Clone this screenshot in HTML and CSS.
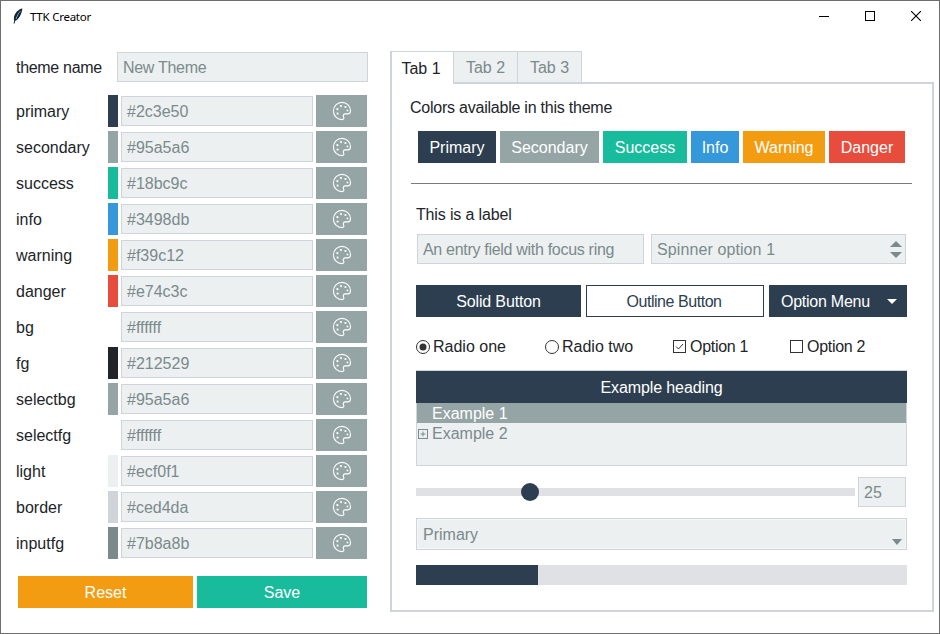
FILE: index.html
```html
<!DOCTYPE html>
<html lang="en">
<head>
    <meta charset="UTF-8">
    <title>TTK Creator</title>
    <link rel="stylesheet" href="styles.css">
</head>
<body>
<svg class="defs" width="0" height="0">
    <symbol id="palette" viewBox="0 0 20 20">
        <path d="M10 1.4C5.2 1.4 1.4 5.2 1.4 10c0 4.8 3.9 8.6 8.6 8.6 1.7 0 2.3-1.2 1.6-2.5-.9-1.6-.1-3.2 1.7-3.2h2.5c1.7 0 2.7-1.2 2.7-3.1 0-4.7-3.7-8.4-8.5-8.4z" fill="none" stroke="#fff" stroke-width="1.1"/>
        <circle cx="5.4" cy="8.2" r="1.1" fill="#fff"/>
        <circle cx="9" cy="5" r="1.1" fill="#fff"/>
        <circle cx="13.4" cy="6" r="1.1" fill="#fff"/>
        <circle cx="15.4" cy="9.4" r=".9" fill="#fff"/>
        <circle cx="5.6" cy="12.6" r="1.1" fill="#fff"/>
    </symbol>
</svg>
<div class="window">
    <!-- Title bar -->
    <div class="titlebar">
        <svg class="app-icon" width="10" height="16" viewBox="0 0 10 16">
            <path d="M9.4 .5C5.5 1 1.5 5 .9 9.8c-.2 1.4.2 2.6.9 3.2C5.4 12 8.6 7 9.4 .5z" fill="#16222e"/>
            <path d="M7.5 3C5.5 5 4 8 3 11" stroke="#6fa8dc" stroke-width="1" fill="none"/>
            <path d="M1.8 12.5L1 15.5" stroke="#16222e" stroke-width="1"/>
        </svg>
        <span class="app-title">TTK Creator</span>
        <div class="win-controls">
            <div class="win-btn"><svg width="10" height="10" viewBox="0 0 10 10"><path d="M0 5.5h10" stroke="#000"/></svg></div>
            <div class="win-btn"><svg width="10" height="10" viewBox="0 0 10 10"><rect x=".5" y=".5" width="9" height="9" fill="none" stroke="#000"/></svg></div>
            <div class="win-btn"><svg width="10" height="10" viewBox="0 0 10 10"><path d="M0 0l10 10M10 0L0 10" stroke="#000" stroke-width="1.1"/></svg></div>
        </div>
    </div>

    <div class="main">
        <!-- Left side: color settings -->
        <div class="settings">
            <div class="name-row">
                <span class="name-label">theme name</span>
                <div class="field name-field">New Theme</div>
            </div>
            <div class="color-rows">
                <div class="color-row"><span>primary</span><i class="swatch c-primary"></i><div class="field">#2c3e50</div><div class="pick"><svg width="20" height="20"><use href="#palette"/></svg></div></div>
                <div class="color-row"><span>secondary</span><i class="swatch c-secondary"></i><div class="field">#95a5a6</div><div class="pick"><svg width="20" height="20"><use href="#palette"/></svg></div></div>
                <div class="color-row"><span>success</span><i class="swatch c-success"></i><div class="field">#18bc9c</div><div class="pick"><svg width="20" height="20"><use href="#palette"/></svg></div></div>
                <div class="color-row"><span>info</span><i class="swatch c-info"></i><div class="field">#3498db</div><div class="pick"><svg width="20" height="20"><use href="#palette"/></svg></div></div>
                <div class="color-row"><span>warning</span><i class="swatch c-warning"></i><div class="field">#f39c12</div><div class="pick"><svg width="20" height="20"><use href="#palette"/></svg></div></div>
                <div class="color-row"><span>danger</span><i class="swatch c-danger"></i><div class="field">#e74c3c</div><div class="pick"><svg width="20" height="20"><use href="#palette"/></svg></div></div>
                <div class="color-row"><span>bg</span><i class="swatch c-bg"></i><div class="field">#ffffff</div><div class="pick"><svg width="20" height="20"><use href="#palette"/></svg></div></div>
                <div class="color-row"><span>fg</span><i class="swatch c-fg"></i><div class="field">#212529</div><div class="pick"><svg width="20" height="20"><use href="#palette"/></svg></div></div>
                <div class="color-row"><span>selectbg</span><i class="swatch c-secondary"></i><div class="field">#95a5a6</div><div class="pick"><svg width="20" height="20"><use href="#palette"/></svg></div></div>
                <div class="color-row"><span>selectfg</span><i class="swatch c-bg"></i><div class="field">#ffffff</div><div class="pick"><svg width="20" height="20"><use href="#palette"/></svg></div></div>
                <div class="color-row"><span>light</span><i class="swatch c-light"></i><div class="field">#ecf0f1</div><div class="pick"><svg width="20" height="20"><use href="#palette"/></svg></div></div>
                <div class="color-row"><span>border</span><i class="swatch c-border"></i><div class="field">#ced4da</div><div class="pick"><svg width="20" height="20"><use href="#palette"/></svg></div></div>
                <div class="color-row"><span>inputfg</span><i class="swatch c-inputfg"></i><div class="field">#7b8a8b</div><div class="pick"><svg width="20" height="20"><use href="#palette"/></svg></div></div>
            </div>
            <div class="actions">
                <div class="btn c-warning reset-btn">Reset</div>
                <div class="btn c-success save-btn">Save</div>
            </div>
        </div>

        <!-- Right side: preview -->
        <div class="preview">
            <div class="tabs">
                <div class="tab tab-active">Tab 1</div>
                <div class="tab">Tab 2</div>
                <div class="tab">Tab 3</div>
            </div>
            <div class="panel">
                <div class="panel-title">Colors available in this theme</div>
                <div class="swatch-btns">
                    <div class="btn c-primary b1">Primary</div>
                    <div class="btn c-secondary b2">Secondary</div>
                    <div class="btn c-success b3">Success</div>
                    <div class="btn c-info b4">Info</div>
                    <div class="btn c-warning b5">Warning</div>
                    <div class="btn c-danger b6">Danger</div>
                </div>
                <div class="separator"></div>
                <div class="sample-label">This is a label</div>
                <div class="entry-row">
                    <div class="field entry-sample">An entry field with focus ring</div>
                    <div class="field spinner-sample">Spinner option 1
                        <div class="spin-arrows"><i class="arrow-up"></i><i class="arrow-down"></i></div>
                    </div>
                </div>
                <div class="button-row">
                    <div class="btn c-primary solid-btn">Solid Button</div>
                    <div class="btn outline-btn">Outline Button</div>
                    <div class="btn c-primary menu-btn">Option Menu<i class="menu-arrow"></i></div>
                </div>
                <div class="check-row">
                    <div class="check check-r1"><svg width="14" height="14" viewBox="0 0 14 14"><circle cx="7" cy="7" r="6.5" fill="none" stroke="#333" stroke-width="1"/><circle cx="7" cy="7" r="3.5" fill="#333"/></svg>Radio one</div>
                    <div class="check check-r2"><svg width="14" height="14" viewBox="0 0 14 14"><circle cx="7" cy="7" r="6.5" fill="none" stroke="#333" stroke-width="1"/></svg>Radio two</div>
                    <div class="check check-c1"><svg width="14" height="14" viewBox="0 0 14 14"><rect x=".5" y=".5" width="12" height="12" fill="none" stroke="#333"/><path d="M3 6.5l2.5 2.5L10 4" fill="none" stroke="#333"/></svg><span class="option-text">Option 1</span></div>
                    <div class="check"><svg width="14" height="14" viewBox="0 0 14 14"><rect x=".5" y=".5" width="12" height="12" fill="none" stroke="#333"/></svg><span class="option-text">Option 2</span></div>
                </div>
                <div class="tree">
                    <div class="tree-head">Example heading</div>
                    <div class="tree-item tree-selected">Example 1</div>
                    <div class="tree-item tree-child"><svg width="10" height="10" viewBox="0 0 10 10"><rect x=".5" y=".5" width="9" height="9" fill="none" stroke="#7b8a8b"/><path d="M2.5 5h5M5 2.5v5" stroke="#7b8a8b"/></svg>Example 2</div>
                </div>
                <div class="slider-row">
                    <div class="slider-track"><i class="slider-thumb"></i></div>
                    <div class="field slider-value">25</div>
                </div>
                <div class="combo">Primary<i class="combo-arrow"></i></div>
                <div class="progress"><div class="progress-fill" style="width: 24.85%"></div></div>
            </div>
        </div>
    </div>
</div>
</body>
</html>
```

FILE: styles.css
```css
body {
    margin: 0;
    font-family: "Liberation Sans", Arial, sans-serif;
    font-size: 16px;
    color: #212529;
    background-color: #fff;
}

.defs {
    display: block;
    height: 0;
}

.window {
    width: 940px;
    height: 634px;
    box-sizing: border-box;
    border: 1px solid #6e6e6e;
    display: flex;
    flex-direction: column;
    overflow: hidden;
}

/* Title bar */
.titlebar {
    height: 30px;
    display: flex;
    align-items: center;
    padding-left: 12px;
    flex-shrink: 0;
}

.app-icon {
    margin-right: 7px;
}

.app-title {
    font-family: "Noto Sans", sans-serif;
    font-size: 11.5px;
    letter-spacing: -0.25px;
    color: #000;
}

.win-controls {
    margin-left: auto;
    display: flex;
}

.win-btn {
    width: 46px;
    height: 30px;
    display: flex;
    align-items: center;
    justify-content: center;
}

.main {
    display: flex;
    flex: 1;
}

/* Left side */
.settings {
    width: 366px;
    margin-left: 15px;
    padding-top: 21px;
}

.name-row {
    display: flex;
    align-items: center;
    height: 30px;
}

.name-label {
    width: 101px;
    padding-top: 1px;
    letter-spacing: -0.3px;
}

.color-rows {
    display: flex;
    flex-direction: column;
    gap: 4px;
    margin-top: 13px;
}

.color-row {
    display: flex;
    align-items: center;
    height: 32px;
}

.color-row span {
    width: 92px;
    padding-top: 2px;
}

.swatch {
    width: 10px;
    height: 32px;
    margin-right: 3px;
}

.field {
    box-sizing: border-box;
    width: 192px;
    height: 30px;
    padding: 1px 0 0 5px;
    display: flex;
    align-items: center;
    background-color: #ecf0f1;
    border: 1px solid #ced4da;
    color: #7b8a8b;
}

.name-field {
    width: 251px;
    letter-spacing: -0.3px;
}

.pick {
    width: 51px;
    height: 32px;
    margin-left: 3px;
    background-color: #95a5a6;
    display: flex;
    align-items: center;
    justify-content: center;
}

.c-primary { background-color: #2c3e50; }
.c-secondary { background-color: #95a5a6; }
.c-success { background-color: #18bc9c; }
.c-info { background-color: #3498db; }
.c-warning { background-color: #f39c12; }
.c-danger { background-color: #e74c3c; }
.c-bg { background-color: #fff; }
.c-fg { background-color: #212529; }
.c-light { background-color: #ecf0f1; }
.c-border { background-color: #ced4da; }
.c-inputfg { background-color: #7b8a8b; }

.btn {
    height: 32px;
    padding-top: 1px;
    display: flex;
    align-items: center;
    justify-content: center;
    color: #fff;
    box-sizing: border-box;
}

.actions {
    display: flex;
    gap: 4px;
    margin: 17px 0 0 2px;
}

.reset-btn { width: 175px; }
.save-btn { width: 170px; }

/* Right side */
.preview {
    margin-left: 8px;
    padding-top: 20px;
    width: 544px;
}

.tabs {
    display: flex;
    height: 31px;
}

.tab {
    box-sizing: border-box;
    width: 64px;
    padding-top: 2px;
    display: flex;
    align-items: center;
    justify-content: center;
    background-color: #ecf0f1;
    color: #7b8a8b;
    border: 1px solid #ced4da;
    border-left: 0;
    border-bottom: 0;
}

.tab-active {
    padding-right: 3px;
    background-color: #fff;
    color: #212529;
    border-left: 2px solid #ced4da;
    border-right: 1px solid #ced4da;
    position: relative;
    z-index: 1;
    height: 33px;
}

.panel {
    box-sizing: border-box;
    height: 530px;
    border: 2px solid #ced4da;
    padding: 14px 0 0 18px;
}

.panel-title {
    height: 20px;
    line-height: 20px;
    letter-spacing: -0.23px;
}

.swatch-btns {
    display: flex;
    gap: 4px;
    margin: 13px 0 0 8px;
}

.b1 { width: 78px; }
.b2 { width: 99px; }
.b3 { width: 84px; }
.b4 { width: 48px; }
.b5 { width: 82px; }
.b6 { width: 76px; }

.separator {
    width: 501px;
    height: 1px;
    margin: 20px 0 0 1px;
    background-color: #7b7b7b;
}

.sample-label {
    margin: 21px 0 0 6px;
    height: 20px;
    line-height: 20px;
    letter-spacing: -0.15px;
}

.entry-row {
    display: flex;
    gap: 7px;
    margin: 9px 0 0 7px;
}

.entry-sample {
    width: 227px;
    letter-spacing: -0.3px;
}

.spinner-sample {
    width: 255px;
    padding-right: 3px;
    letter-spacing: 0.1px;
    justify-content: space-between;
}

.spin-arrows {
    display: flex;
    flex-direction: column;
    gap: 5px;
}

.arrow-up {
    border-left: 6px solid transparent;
    border-right: 6px solid transparent;
    border-bottom: 6px solid #7b8a8b;
}

.arrow-down {
    border-left: 6px solid transparent;
    border-right: 6px solid transparent;
    border-top: 6px solid #7b8a8b;
}

.button-row {
    display: flex;
    margin: 21px 0 0 6px;
    gap: 5px;
}

.solid-btn {
    width: 165px;
    letter-spacing: -0.15px;
}

.outline-btn {
    width: 178px;
    padding-right: 2px;
    background-color: #fff;
    color: #2c3e50;
    border: 1px solid #2c3e50;
    letter-spacing: -0.45px;
}

.menu-btn {
    width: 138px;
    justify-content: flex-start;
    padding-left: 12px;
    letter-spacing: -0.25px;
}

.menu-arrow {
    margin-left: 17px;
    border-left: 5.5px solid transparent;
    border-right: 5.5px solid transparent;
    border-top: 5.5px solid #fff;
}

.check-row {
    display: flex;
    margin: 20px 0 0 6px;
    height: 20px;
}

.check {
    display: flex;
    align-items: center;
    gap: 3px;
}

.check-r1 { width: 129px; }
.check-r2 { width: 128px; }
.check-c1 { width: 117px; }

.option-text {
    letter-spacing: -0.3px;
}

.tree {
    box-sizing: border-box;
    width: 491px;
    height: 96px;
    margin: 13px 0 0 6px;
    background-color: #ecf0f1;
    border: 1px solid #ced4da;
    color: #7b8a8b;
}

.tree-head {
    box-sizing: border-box;
    height: 32px;
    padding-top: 1px;
    margin: 0 -1px;
    background-color: #2c3e50;
    color: #fff;
    letter-spacing: -0.1px;
    display: flex;
    align-items: center;
    justify-content: center;
}

.tree-item {
    box-sizing: border-box;
    height: 20px;
    padding: 1px 0 0 15px;
    display: flex;
    align-items: center;
}

.tree-selected {
    background-color: #95a5a6;
    color: #fff;
}

.tree-child {
    padding-left: 1px;
    gap: 4px;
}

.slider-row {
    display: flex;
    align-items: center;
    margin: 11px 0 0 6px;
}

.slider-track {
    position: relative;
    width: 439px;
    height: 8px;
    background-color: #e0e1e4;
}

.slider-thumb {
    position: absolute;
    left: 105px;
    top: -5px;
    width: 18px;
    height: 18px;
    border-radius: 50%;
    background-color: #2c3e50;
}

.slider-value {
    width: 48px;
    margin-left: 3px;
}

.combo {
    box-sizing: border-box;
    position: relative;
    width: 491px;
    height: 32px;
    margin: 11px 0 0 6px;
    padding: 1px 0 0 6px;
    display: flex;
    align-items: center;
    background-color: #ecf0f1;
    border: 1px solid #ced4da;
    box-shadow: inset 0 0 0 1px #f5f7f8;
    color: #7b8a8b;
}

.combo-arrow {
    position: absolute;
    right: 4px;
    bottom: 4px;
    border-left: 5.5px solid transparent;
    border-right: 5.5px solid transparent;
    border-top: 6px solid #7b8a8b;
}

.progress {
    width: 491px;
    height: 20px;
    margin: 15px 0 0 6px;
    background-color: #e0e1e4;
}

.progress-fill {
    height: 100%;
    background-color: #2c3e50;
}
```
